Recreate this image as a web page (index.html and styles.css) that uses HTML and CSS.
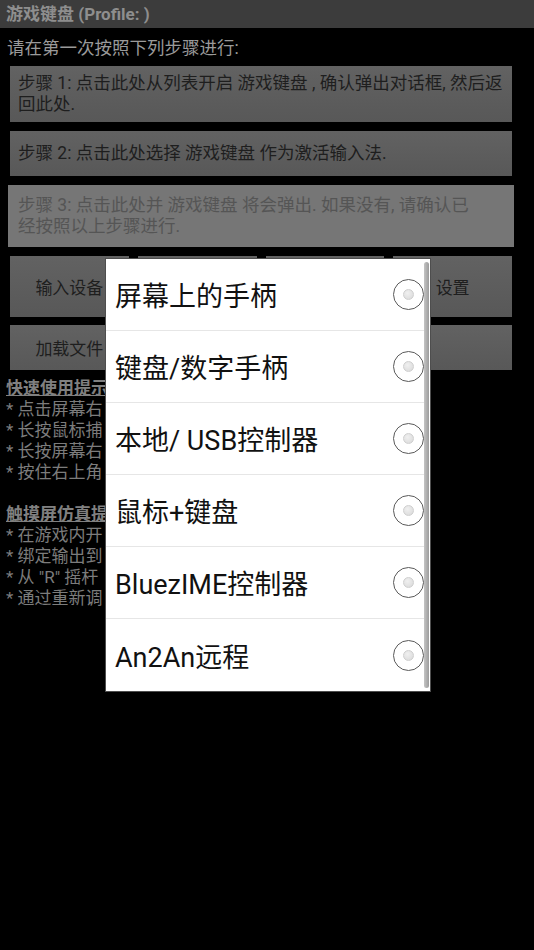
FILE: index.html
```html
<!DOCTYPE html>
<html lang="zh-CN">
<head>
<meta charset="utf-8">
<title>游戏键盘</title>
<link rel="stylesheet" href="styles.css">
</head>
<body>
<div class="screen">
  <div class="titlebar">游戏键盘 (Profile: )</div>
  <div class="intro">请在第一次按照下列步骤进行:</div>
  <div class="steps">
    <div class="btn step step1">步骤 1: 点击此处从列表开启 游戏键盘 , 确认弹出对话框, 然后返回此处.</div>
    <div class="btn step step2">步骤 2: 点击此处选择 游戏键盘 作为激活输入法.</div>
    <div class="btn step step3">步骤 3: 点击此处并 游戏键盘 将会弹出. 如果没有, 请确认已经按照以上步骤进行.</div>
  </div>
  <div class="btnrow row1">
    <div class="btn cell">输入设备</div>
    <div class="btn cell"></div>
    <div class="btn cell"></div>
    <div class="btn cell">设置</div>
  </div>
  <div class="btnrow row2">
    <div class="btn cell">加载文件</div>
    <div class="btn cell"></div>
    <div class="btn cell"></div>
    <div class="btn cell"></div>
  </div>
  <div class="hints">
    <div class="hhead">快速使用提示</div>
    <div class="hline">* 点击屏幕右</div>
    <div class="hline">* 长按鼠标捕</div>
    <div class="hline">* 长按屏幕右</div>
    <div class="hline">* 按住右上角</div>
    <div class="hline blank">&nbsp;</div>
    <div class="hhead">触摸屏仿真提</div>
    <div class="hline">* 在游戏内开</div>
    <div class="hline">* 绑定输出到</div>
    <div class="hline">* 从 "R" 摇杆</div>
    <div class="hline">* 通过重新调</div>
  </div>

  <div class="dialog">
    <div class="item"><span class="label">屏幕上的手柄</span><span class="radio"></span></div>
    <div class="item"><span class="label">键盘/数字手柄</span><span class="radio"></span></div>
    <div class="item"><span class="label">本地/ USB控制器</span><span class="radio"></span></div>
    <div class="item"><span class="label">鼠标+键盘</span><span class="radio"></span></div>
    <div class="item"><span class="label">BluezIME控制器</span><span class="radio"></span></div>
    <div class="item last"><span class="label">An2An远程</span><span class="radio"></span></div>
    <div class="scrollbar"></div>
  </div>
</div>
</body>
</html>
```

FILE: styles.css
```css
html, body {
  margin: 0;
  padding: 0;
  background: #000;
}
body {
  font-family: Roboto, "Noto Sans CJK SC", sans-serif;
  width: 534px;
  height: 950px;
  overflow: hidden;
}
.screen {
  position: relative;
  width: 534px;
  height: 950px;
  background: #000;
}
.titlebar {
  height: 28px;
  line-height: 29px;
  background: #3c3c3c;
  color: #8e8e8e;
  font-weight: bold;
  font-size: 17px;
  padding-left: 6px;
  white-space: nowrap;
}
.intro {
  color: #9a9a9a;
  font-size: 17.5px;
  line-height: 24px;
  padding: 8px 0 0 7px;
  height: 26px;
}
.steps {
  display: flex;
  flex-direction: column;
  gap: 9px;
  margin-top: 4px;
}
.btn {
  background: linear-gradient(#626262, #585858);
  color: #1e1e1e;
  box-sizing: border-box;
}
.step {
  margin-left: 10px;
  width: 502px;
  font-size: 17.5px;
  line-height: 21px;
  padding: 7px 6px 7px 8px;
  display: flex;
  align-items: center;
}
.step1 { height: 56px; }
.step2 { height: 45px; }
.step3 {
  width: 506px;
  margin-left: 8px;
  height: 62px;
  padding: 9px 40px 9px 10px;
  background: #767676;
  color: #555;
}
.btnrow {
  display: flex;
  gap: 9px;
  margin: 9px 0 0 10px;
  width: 502px;
}
.row1 { height: 61px; }
.row2 { height: 45px; margin-top: 8px; }
.cell {
  flex: 1;
  display: flex;
  align-items: center;
  justify-content: center;
  font-size: 17px;
  white-space: nowrap;
  overflow: hidden;
}
.hints {
  margin-top: 8px;
  margin-left: 6px;
  width: 99px;
  color: #7c7c7c;
  font-size: 17px;
  line-height: 21px;
  white-space: nowrap;
}
.hhead {
  font-weight: bold;
  text-decoration: underline;
  color: #808080;
}
.dialog {
  position: absolute;
  left: 105px;
  top: 258px;
  width: 326px;
  height: 434px;
  box-sizing: border-box;
  border: 1px solid #4e4e4e;
  background: #fff;
}
.item {
  height: 72px;
  box-sizing: border-box;
  border-bottom: 1px solid #e6e6e6;
  margin-right: 6px;
  display: flex;
  align-items: center;
  justify-content: space-between;
  padding: 0 0 0 9px;
}
.item.last { border-bottom: none; }
.label {
  font-size: 27px;
  color: #111;
  white-space: nowrap;
}
.radio {
  width: 31px;
  height: 31px;
  box-sizing: border-box;
  border: 1.8px solid #5a5a5a;
  border-radius: 50%;
  display: flex;
  align-items: center;
  justify-content: center;
  background: #fff;
}
.radio::after {
  content: "";
  width: 11px;
  height: 11px;
  box-sizing: border-box;
  border-radius: 50%;
  border: 1px solid #cfcfcf;
  background: radial-gradient(circle at 40% 35%, #f0f0f0, #d8d8d8);
}
.scrollbar {
  position: absolute;
  right: 1px;
  top: 3px;
  bottom: 3px;
  width: 5px;
  border-radius: 3px;
  background: linear-gradient(90deg, #c4c4c4, #9c9c9c);
}
```
